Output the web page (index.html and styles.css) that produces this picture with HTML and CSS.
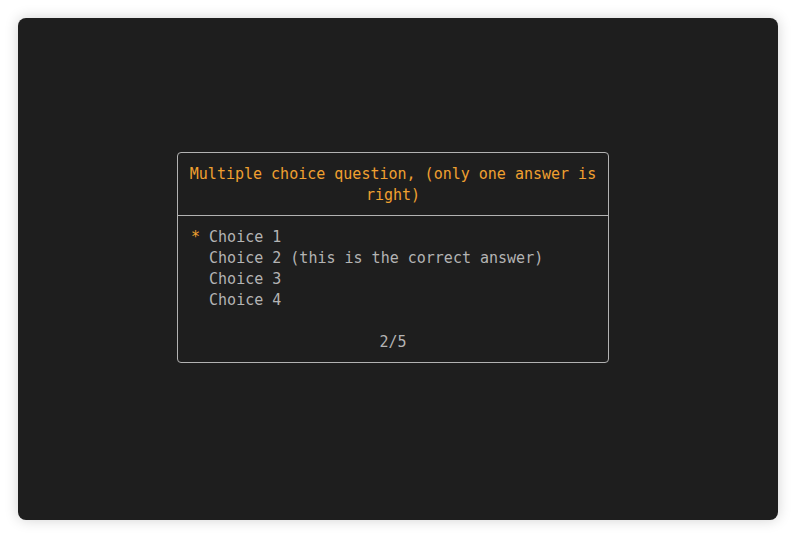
FILE: index.html
```html
<!DOCTYPE html>
<html>
<head>
<meta charset="utf-8">
<link rel="stylesheet" href="styles.css">
</head>
<body>
<div class="panel">
  <div class="dialog">
    <div class="title">Multiple choice question, (only one answer is right)</div>
    <div class="body">
      <div class="choice"><span class="mark">*</span> Choice 1</div>
      <div class="choice">  Choice 2 (this is the correct answer)</div>
      <div class="choice">  Choice 3</div>
      <div class="choice">  Choice 4</div>
      <div class="choice"> </div>
      <div class="counter">2/5</div>
    </div>
  </div>
</div>
</body>
</html>
```

FILE: styles.css
```css
html, body {
  margin: 0;
  padding: 0;
  background: #ffffff;
}
body {
  padding: 18px;
  box-sizing: border-box;
  width: 796px;
  height: 538px;
}
.panel {
  width: 760px;
  height: 502px;
  box-sizing: border-box;
  background: #1e1e1e;
  border-radius: 8px;
  box-shadow: 0 0 14px rgba(0,0,0,0.18);
  padding: 134px 0 0 159px;
  font-family: "DejaVu Sans Mono", "Liberation Mono", monospace;
  font-size: 15px;
  line-height: 21px;
}
.dialog {
  width: 432px;
  box-sizing: border-box;
  border: 1px solid #b2b2b2;
  border-radius: 4px;
}
.title {
  color: #f0a030;
  text-align: center;
  padding: 11px 10px 9px;
  border-bottom: 1px solid #b2b2b2;
}
.body {
  padding: 11px 13px 9px;
  color: #b4b4b4;
}
.choice {
  white-space: pre;
  height: 21px;
}
.mark {
  color: #f0a030;
}
.counter {
  text-align: center;
}
```
